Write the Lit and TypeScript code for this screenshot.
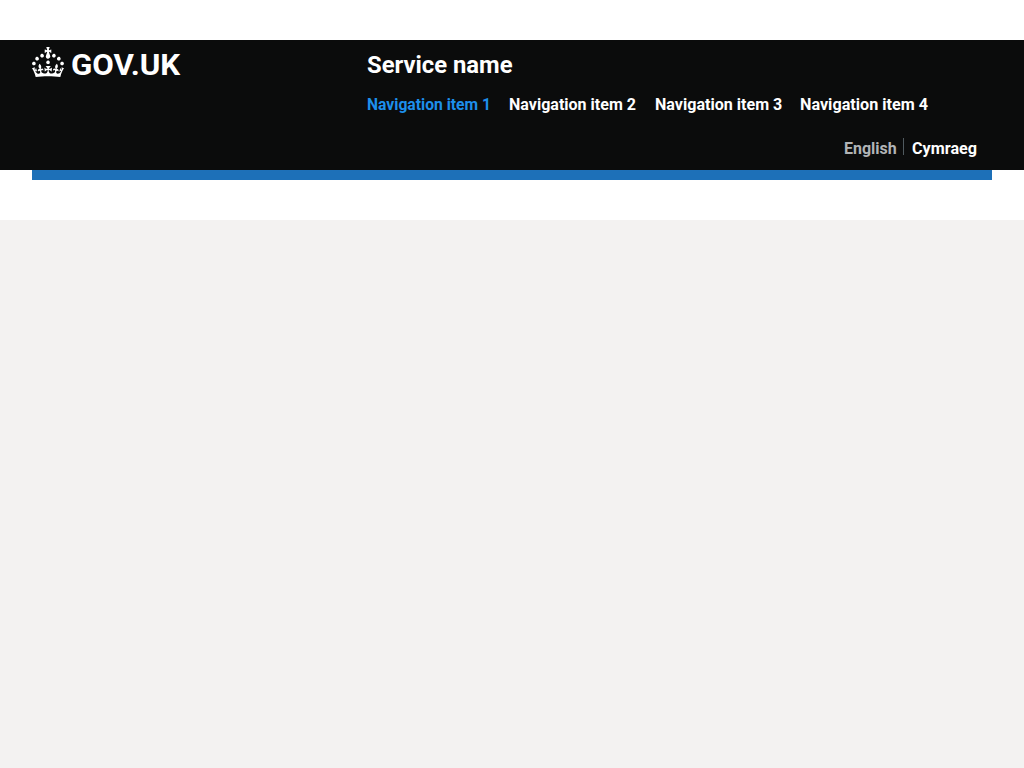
import { LitElement, html, css } from "lit";
import { customElement } from "lit/decorators.js";

@customElement("app-root")
export class AppRoot extends LitElement {
  static styles = css`
    :host {
      display: block;
      min-height: 100vh;
      background: #f3f2f1;
      font-family: Roboto, "Liberation Sans", sans-serif;
      font-weight: 700;
      color: #fff;
    }
    .frame { background: #fff; padding: 40px 0; }
    header { background: #0b0c0c; }
    .container {
      display: grid;
      grid-template-columns: 335px 1fr;
      margin: 0 32px;
      height: 130px;
    }
    .bar { height: 10px; margin: 0 32px; background: #1d70b8; }
    a { color: inherit; text-decoration: none; }
    .logo { display: block; padding-top: 7px; height: 30px; width: 148px; }
    .logo svg { display: block; overflow: visible; }
    .content { display: flex; flex-direction: column; }
    .service {
      font-size: 24px;
      line-height: 30px;
      padding-top: 10px;
      white-space: nowrap;
    }
    .row { display: block; overflow: visible; }
    ul { display: flex; list-style: none; margin: 0; padding: 0; }
    .nav { gap: 18.3px; padding-top: 14px; }
    .nav li, .lang li { height: 20px; }
    .active { color: #1d8feb; }
    .lang { justify-content: flex-end; padding: 24px 15px 0 0; }
    .muted { color: #b1b4b6; }
    .lang .divider { width: 1px; height: 17px; margin: 0 8px 0 6px; background: #505a5f; }
  `;

  private label(text: string, width: number, size: number, height: number, base: number) {
    return html`<svg class="row" width=${width} height=${height}>
      <text x="0" y=${base} font-size=${size} textLength=${width} lengthAdjust="spacingAndGlyphs" fill="currentColor">${text}</text>
    </svg>`;
  }

  render() {
    const items: [string, number][] = [
      ["Navigation item 1", 124],
      ["Navigation item 2", 127],
      ["Navigation item 3", 127.3],
      ["Navigation item 4", 128],
    ];
    return html`
      <div class="frame">
        <header>
          <div class="container">
            <a class="logo" href="#" aria-label="GOV.UK">
              <svg width="148" height="30" viewBox="0 0 148 30" fill="currentColor">
                <path d="M22.6 10.4c-1 .4-2-.1-2.4-1-.4-.9.1-2 1-2.4.9-.4 2 .1 2.4 1s-.1 2-1 2.4m-5.9 6.7c-.9.4-2-.1-2.4-1-.4-.9.1-2 1-2.4.9-.4 2 .1 2.4 1s-.1 2-1 2.4m10.8-3.7c-1 .4-2-.1-2.4-1-.4-.9.1-2 1-2.4.9-.4 2 .1 2.4 1s0 2-1 2.4m3.3 4.8c-1 .4-2-.1-2.4-1-.4-.9.1-2 1-2.4.9-.4 2 .1 2.4 1s-.1 2-1 2.4M17 4.7l2.3 1.2V2.5l-2.3.7-.2-.2.9-3h-3.4l.9 3-.2.2c-.1.1-2.3-.7-2.3-.7v3.4L15 4.7c.1.1.1.2.2.2l-1.3 4c-.1.2-.1.4-.1.6 0 1.1.8 2 1.9 2.2h.7c1-.2 1.9-1.1 1.9-2.1 0-.2 0-.4-.1-.6l-1.3-4c-.1-.2 0-.2.1-.3m-7.6 5.7c.9.4 2-.1 2.4-1 .4-.9-.1-2-1-2.4-.9-.4-2 .1-2.4 1s0 2 1 2.4m-5 3c.9.4 2-.1 2.4-1 .4-.9-.1-2-1-2.4-.9-.4-2 .1-2.4 1s.1 2 1 2.4m-3.2 4.8c.9.4 2-.1 2.4-1 .4-.9-.1-2-1-2.4-.9-.4-2 .1-2.4 1s0 2 1 2.4m14.8 11c4.4 0 8.6.3 12.3.8 1.1-4.5 2.4-7 3.7-8.8l-2.5-.9c.2 1.3.3 1.9 0 2.7-.4-.4-.8-1.1-1.1-2.3l-1.2 4c.7-.5 1.3-.8 2-.9-1.1 2.5-2.6 3.1-3.5 3-1.1-.2-1.7-1.2-1.5-2.1.3-1.2 1.5-1.5 2.1-.1 1.1-2.3-.8-3-2-2.3 1.9-1.9 2.1-3.5.6-5.6-2.1 1.6-2.1 3.2-1.2 5.5-1.2-1.4-3.2-.6-2.5 1.6.9-1.4 2.1-.5 1.9.8-.2 1.1-1.7 2.1-3.5 1.9-2.7-.2-2.9-2.1-2.9-3.6.7-.1 1.9.5 2.9 1.9l.4-4.3c-1.1 1.1-2.1 1.4-3.2 1.4.4-1.2 2.1-3 2.1-3h-5.4s1.7 1.9 2.1 3c-1.1 0-2.1-.2-3.2-1.4l.4 4.3c1-1.4 2.2-2 2.9-1.9-.1 1.5-.2 3.4-2.9 3.6-1.9.2-3.4-.8-3.5-1.9-.2-1.3 1-2.2 1.9-.8.7-2.3-1.2-3-2.5-1.6.9-2.2.9-3.9-1.2-5.5-1.5 2-1.3 3.7.6 5.6-1.2-.7-3.1 0-2 2.3.6-1.4 1.8-1.1 2.1.1.2.9-.3 1.9-1.5 2.1-.9.2-2.4-.5-3.5-3 .6 0 1.2.3 2 .9l-1.2-4c-.3 1.1-.7 1.9-1.1 2.3-.3-.8-.2-1.4 0-2.7l-2.9.9C1.3 23 2.6 25.5 3.7 30c3.7-.5 7.9-.8 12.3-.8" />
                <text x="39" y="28" font-size="29.8" textLength="109.2" lengthAdjust="spacingAndGlyphs">GOV.UK</text>
              </svg>
            </a>
            <div class="content">
              <a class="service" href="#">${this.label("Service name", 145.5, 24.5, 30, 23)}</a>
              <nav>
                <ul class="nav">
                  ${items.map(([text, width], i) => html`<li class=${i === 0 ? "active" : ""}>
                    <a href="#">${this.label(text, width, 16.5, 20, 16)}</a>
                  </li>`)}
                </ul>
              </nav>
              <ul class="lang">
                <li class="muted">${this.label("English", 52.8, 16.5, 20, 16)}</li>
                <li class="divider"></li>
                <li><a href="#">${this.label("Cymraeg", 65, 16.5, 20, 16)}</a></li>
              </ul>
            </div>
          </div>
        </header>
        <div class="bar"></div>
      </div>
    `;
  }
}
